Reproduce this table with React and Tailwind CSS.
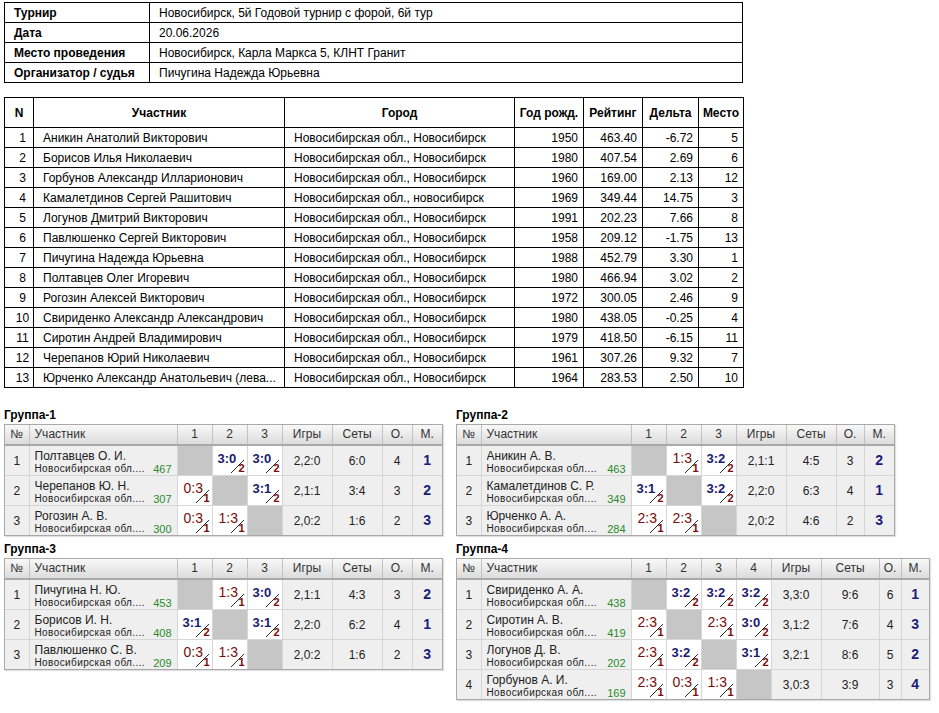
import React from 'react';

const info = [
  ['Турнир', 'Новосибирск, 5й Годовой турнир с форой, 6й тур'],
  ['Дата', '20.06.2026'],
  ['Место проведения', 'Новосибирск, Карла Маркса 5, КЛНТ Гранит'],
  ['Организатор / судья', 'Пичугина Надежда Юрьевна'],
];

const city = 'Новосибирская обл., Новосибирск';

const players = [
  [1, 'Аникин Анатолий Викторович', city, 1950, '463.40', '-6.72', 5],
  [2, 'Борисов Илья Николаевич', city, 1980, '407.54', '2.69', 6],
  [3, 'Горбунов Александр Илларионович', city, 1960, '169.00', '2.13', 12],
  [4, 'Камалетдинов Сергей Рашитович', 'Новосибирская обл., новосибирск', 1969, '349.44', '14.75', 3],
  [5, 'Логунов Дмитрий Викторович', city, 1991, '202.23', '7.66', 8],
  [6, 'Павлюшенко Сергей Викторович', city, 1958, '209.12', '-1.75', 13],
  [7, 'Пичугина Надежда Юрьевна', city, 1988, '452.79', '3.30', 1],
  [8, 'Полтавцев Олег Игоревич', city, 1980, '466.94', '3.02', 2],
  [9, 'Рогозин Алексей Викторович', city, 1972, '300.05', '2.46', 9],
  [10, 'Свириденко Александр Александрович', city, 1980, '438.05', '-0.25', 4],
  [11, 'Сиротин Андрей Владимирович', city, 1979, '418.50', '-6.15', 11],
  [12, 'Черепанов Юрий Николаевич', city, 1961, '307.26', '9.32', 7],
  [13, 'Юрченко Александр Анатольевич (лева...', city, 1964, '283.53', '2.50', 10],
];

// results: null = own cell, 'score/points'
const groups = [
  {
    title: 'Группа-1',
    cols: ['w-[24px]', 'w-[148px]', 'w-[35px]', 'w-[35px]', 'w-[35px]', 'w-[50px]', 'w-[50px]', 'w-[30px]', 'w-[30px]'],
    rows: [
      ['Полтавцев О. И.', 467, [null, '3:0/2', '3:0/2'], '2,2:0', '6:0', 4, 1],
      ['Черепанов Ю. Н.', 307, ['0:3/1', null, '3:1/2'], '2,1:1', '3:4', 3, 2],
      ['Рогозин А. В.', 300, ['0:3/1', '1:3/1', null], '2,0:2', '1:6', 2, 3],
    ],
  },
  {
    title: 'Группа-2',
    cols: ['w-[24px]', 'w-[150px]', 'w-[35px]', 'w-[35px]', 'w-[35px]', 'w-[50px]', 'w-[50px]', 'w-[28px]', 'w-[30px]'],
    rows: [
      ['Аникин А. В.', 463, [null, '1:3/1', '3:2/2'], '2,1:1', '4:5', 3, 2],
      ['Камалетдинов С. Р.', 349, ['3:1/2', null, '3:2/2'], '2,2:0', '6:3', 4, 1],
      ['Юрченко А. А.', 284, ['2:3/1', '2:3/1', null], '2,0:2', '4:6', 2, 3],
    ],
  },
  {
    title: 'Группа-3',
    cols: ['w-[24px]', 'w-[148px]', 'w-[35px]', 'w-[35px]', 'w-[35px]', 'w-[50px]', 'w-[50px]', 'w-[30px]', 'w-[30px]'],
    rows: [
      ['Пичугина Н. Ю.', 453, [null, '1:3/1', '3:0/2'], '2,1:1', '4:3', 3, 2],
      ['Борисов И. Н.', 408, ['3:1/2', null, '3:1/2'], '2,2:0', '6:2', 4, 1],
      ['Павлюшенко С. В.', 209, ['0:3/1', '1:3/1', null], '2,0:2', '1:6', 2, 3],
    ],
  },
  {
    title: 'Группа-4',
    cols: ['w-[24px]', 'w-[150px]', 'w-[35px]', 'w-[35px]', 'w-[35px]', 'w-[35px]', 'w-[50px]', 'w-[58px]', 'w-[22px]', 'w-[28px]'],
    rows: [
      ['Свириденко А. А.', 438, [null, '3:2/2', '3:2/2', '3:2/2'], '3,3:0', '9:6', 6, 1],
      ['Сиротин А. В.', 419, ['2:3/1', null, '2:3/1', '3:0/2'], '3,1:2', '7:6', 4, 3],
      ['Логунов Д. В.', 202, ['2:3/1', '3:2/2', null, '3:1/2'], '3,2:1', '8:6', 5, 2],
      ['Горбунов А. И.', 169, ['2:3/1', '0:3/1', '1:3/1', null], '3,0:3', '3:9', 3, 4],
    ],
  },
];

const cell = 'h-[29px] p-0 border-r border-b border-[#d6d6d6] last:border-r-0';
const head =
  'h-[19px] p-0 font-normal text-[12px] leading-[19px] text-[#333] border-r border-r-[#c2c2c2] border-b-2 border-b-[#a9a9a9] last:border-r-0 bg-linear-to-b from-[#f8f8f8] to-[#dcdcdc]';

function Score({ s }) {
  if (!s) return <td className={`bg-[#c6c6c6] ${cell}`} />;
  const [score, pts] = s.split('/');
  const win = pts === '2';
  return (
    <td className={`bg-white ${cell}`}>
      <div className="relative h-[29px] overflow-hidden">
        <span
          className={
            win
              ? 'absolute left-[5px] top-[6px] text-[13px] leading-none font-bold text-[#1b1b6e]'
              : 'absolute left-[6px] top-[5px] text-[14px] leading-none text-[#7a0c0c]'
          }
        >
          {score}
        </span>
        <svg className="absolute left-0 top-0" width="35" height="29">
          <line x1="18" y1="27" x2="31" y2="14" stroke="#2a2a2a" strokeWidth="1" />
        </svg>
        <span className="absolute right-[2px] bottom-[1px] text-[11px] leading-none font-bold text-[#7a0c0c]">
          {pts}
        </span>
      </div>
    </td>
  );
}

function GroupTable({ group }) {
  return (
    <div>
      <div className="h-[16px] leading-[16px] mb-[1px] font-bold text-[12px] text-black">{group.title}</div>
      <div className="w-fit border border-[#a9a9a9] shadow-[1px_1px_1px_rgba(0,0,0,0.12)]">
        <table className="table-fixed border-collapse">
          <colgroup>
            {group.cols.map((c, i) => (
              <col key={i} className={c} />
            ))}
          </colgroup>
          <thead>
            <tr>
              <th className={head}>№</th>
              <th className={`${head} text-left pl-[5px]`}>Участник</th>
              {group.rows.map((_, i) => (
                <th key={i} className={head}>
                  {i + 1}
                </th>
              ))}
              <th className={head}>Игры</th>
              <th className={head}>Сеты</th>
              <th className={head}>О.</th>
              <th className={head}>М.</th>
            </tr>
          </thead>
          <tbody>
            {group.rows.map(([name, rating, res, games, sets, pts, place], i) => (
              <tr key={i} className="bg-[#efefef] text-[#222] [&:last-child>td]:border-b-0">
                <td className={`text-center text-[12px] ${cell}`}>{i + 1}</td>
                <td className={`align-top ${cell}`}>
                  <div className="h-[29px] overflow-hidden px-[5px] pt-[3px]">
                    <div className="text-[12px] leading-[14px] truncate">{name}</div>
                    <div className="flex justify-between h-[12px] leading-[12px]">
                      <span className="text-[10px] tracking-[0.4px] text-[#222]">Новосибирская обл....</span>
                      <span className="text-[11px] text-[#2b8a2b]">{rating}</span>
                    </div>
                  </div>
                </td>
                {res.map((s, j) => (
                  <Score key={j} s={s} />
                ))}
                <td className={`text-center text-[12px] ${cell}`}>{games}</td>
                <td className={`text-center text-[12px] ${cell}`}>{sets}</td>
                <td className={`text-center text-[12px] ${cell}`}>{pts}</td>
                <td className={`text-center text-[14px] font-bold text-[#1b1b7a] ${cell}`}>{place}</td>
              </tr>
            ))}
          </tbody>
        </table>
      </div>
    </div>
  );
}

export default function App() {
  const bc = 'border border-black';
  return (
    <div className="min-h-screen bg-white pl-[4px] pt-[2px] pb-[10px] font-['Liberation_Sans',Arial,sans-serif] text-[12px] text-black">
      <table className="w-[739px] table-fixed border-collapse">
        <colgroup>
          <col className="w-[145px]" />
          <col />
        </colgroup>
        <tbody>
          {info.map(([k, v]) => (
            <tr key={k} className="h-[20px]">
              <td className={`${bc} px-[9px] py-0 font-bold`}>{k}</td>
              <td className={`${bc} px-[9px] py-0`}>{v}</td>
            </tr>
          ))}
        </tbody>
      </table>

      <table className="mt-[14px] w-[739px] table-fixed border-collapse">
        <colgroup>
          <col className="w-[29px]" />
          <col className="w-[251px]" />
          <col className="w-[230px]" />
          <col className="w-[69px]" />
          <col className="w-[59px]" />
          <col className="w-[56px]" />
          <col className="w-[45px]" />
        </colgroup>
        <thead>
          <tr className="h-[30px] font-bold">
            <th className={`${bc} p-0`}>N</th>
            <th className={`${bc} p-0`}>Участник</th>
            <th className={`${bc} p-0`}>Город</th>
            <th className={`${bc} p-0`}>Год рожд.</th>
            <th className={`${bc} p-0`}>Рейтинг</th>
            <th className={`${bc} p-0`}>Дельта</th>
            <th className={`${bc} p-0`}>Место</th>
          </tr>
        </thead>
        <tbody>
          {players.map(([n, name, c, year, rating, delta, place]) => (
            <tr key={n} className="h-[20px]">
              <td className={`${bc} py-0 pl-[7px] text-center`}>{n}</td>
              <td className={`${bc} py-0 px-[9px] whitespace-nowrap overflow-hidden`}>{name}</td>
              <td className={`${bc} py-0 px-[9px] whitespace-nowrap overflow-hidden`}>{c}</td>
              <td className={`${bc} py-0 pr-[5px] text-right`}>{year}</td>
              <td className={`${bc} py-0 pr-[5px] text-right`}>{rating}</td>
              <td className={`${bc} py-0 pr-[5px] text-right`}>{delta}</td>
              <td className={`${bc} py-0 pr-[5px] text-right`}>{place}</td>
            </tr>
          ))}
        </tbody>
      </table>

      <div className="mt-[19px] flex gap-[12px]">
        <div className="w-[440px] flex flex-col gap-[5px]">
          <GroupTable group={groups[0]} />
          <GroupTable group={groups[2]} />
        </div>
        <div className="flex flex-col gap-[5px]">
          <GroupTable group={groups[1]} />
          <GroupTable group={groups[3]} />
        </div>
      </div>
    </div>
  );
}
